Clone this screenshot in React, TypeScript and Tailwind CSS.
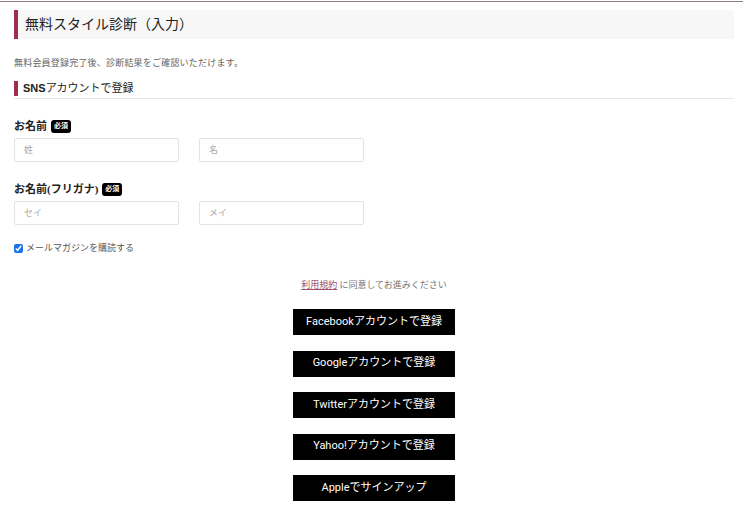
import React from 'react';

const font = { fontFamily: '"Liberation Serif", "Noto Sans CJK JP", serif' };

function Required() {
  return (
    <span className="ml-1 inline-flex h-[13px] items-center rounded-[3px] bg-black px-[3px] text-[7px] font-bold leading-none text-white">
      必須
    </span>
  );
}

function NameRow({ label, first, last }: { label: string; first: string; last: string }) {
  return (
    <div>
      <div className="flex h-[18px] items-center text-[11px] font-bold text-[#222]">
        {label}
        <Required />
      </div>
      <div className="mt-[3px] flex gap-[20px]">
        <input
          placeholder={first}
          className="h-[24px] w-[165px] rounded-[2px] border border-[#e3e3e3] px-[9px] text-[9px] placeholder:text-[#aaa]"
        />
        <input
          placeholder={last}
          className="h-[24px] w-[165px] rounded-[2px] border border-[#e3e3e3] px-[9px] text-[9px] placeholder:text-[#aaa]"
        />
      </div>
    </div>
  );
}

const buttons = [
  'Facebookアカウントで登録',
  'Googleアカウントで登録',
  'Twitterアカウントで登録',
  'Yahoo!アカウントで登録',
  'Appleでサインアップ',
];

export default function App() {
  return (
    <div className="h-[514px] w-[752px] overflow-hidden bg-white" style={font}>
      <div className="mt-px h-px w-[743px] bg-[#8e7c84]" />
      <div className="px-[14px] pt-[8px]">
        <div className="w-[720px]">
          <div className="flex h-[29px] items-center border-l-[4px] border-[#9b2f4d] bg-[#f7f7f7] pl-[7px] text-[14px] text-[#222]">
            無料スタイル診断（入力）
          </div>
          <p className="mt-[17px] text-[9px] leading-[14px] tracking-[0.2px] text-[#666]">
            無料会員登録完了後、診断結果をご確認いただけます。
          </p>
          <div className="mt-[11px] border-b border-[#e6e6e6] pb-[2px]">
            <div className="flex h-[15px] items-center border-l-[4px] border-[#9b2f4d] pl-[5px] text-[11px] text-[#222]">
              <span className="font-bold" style={{ fontFamily: '"Liberation Sans", "Noto Sans CJK JP", sans-serif' }}>
                SNS
              </span>
              アカウントで登録
            </div>
          </div>
          <div className="mt-[18px] flex flex-col gap-[18px]">
            <NameRow label="お名前" first="姓" last="名" />
            <NameRow label="お名前(フリガナ)" first="セイ" last="メイ" />
          </div>
          <label className="mt-[17px] flex items-center gap-[3px] text-[9px] text-[#555]">
            <input type="checkbox" defaultChecked className="h-[9px] w-[9px] accent-[#1a73e8]" />
            メールマガジンを購読する
          </label>
          <div className="mt-[23px] flex flex-col items-center">
            <p className="text-[9px] text-[#777]">
              <span className="text-[#a0506a] underline">利用規約</span> に同意してお進みください
            </p>
            <div className="mt-[17px] flex flex-col gap-[15.5px]">
              {buttons.map((b) => (
                <button
                  key={b}
                  className="h-[26px] w-[162px] bg-black text-[11px] text-white"
                  style={{ fontFamily: '"Roboto", "Noto Sans CJK JP", sans-serif' }}
                >
                  {b}
                </button>
              ))}
            </div>
          </div>
        </div>
      </div>
    </div>
  );
}
